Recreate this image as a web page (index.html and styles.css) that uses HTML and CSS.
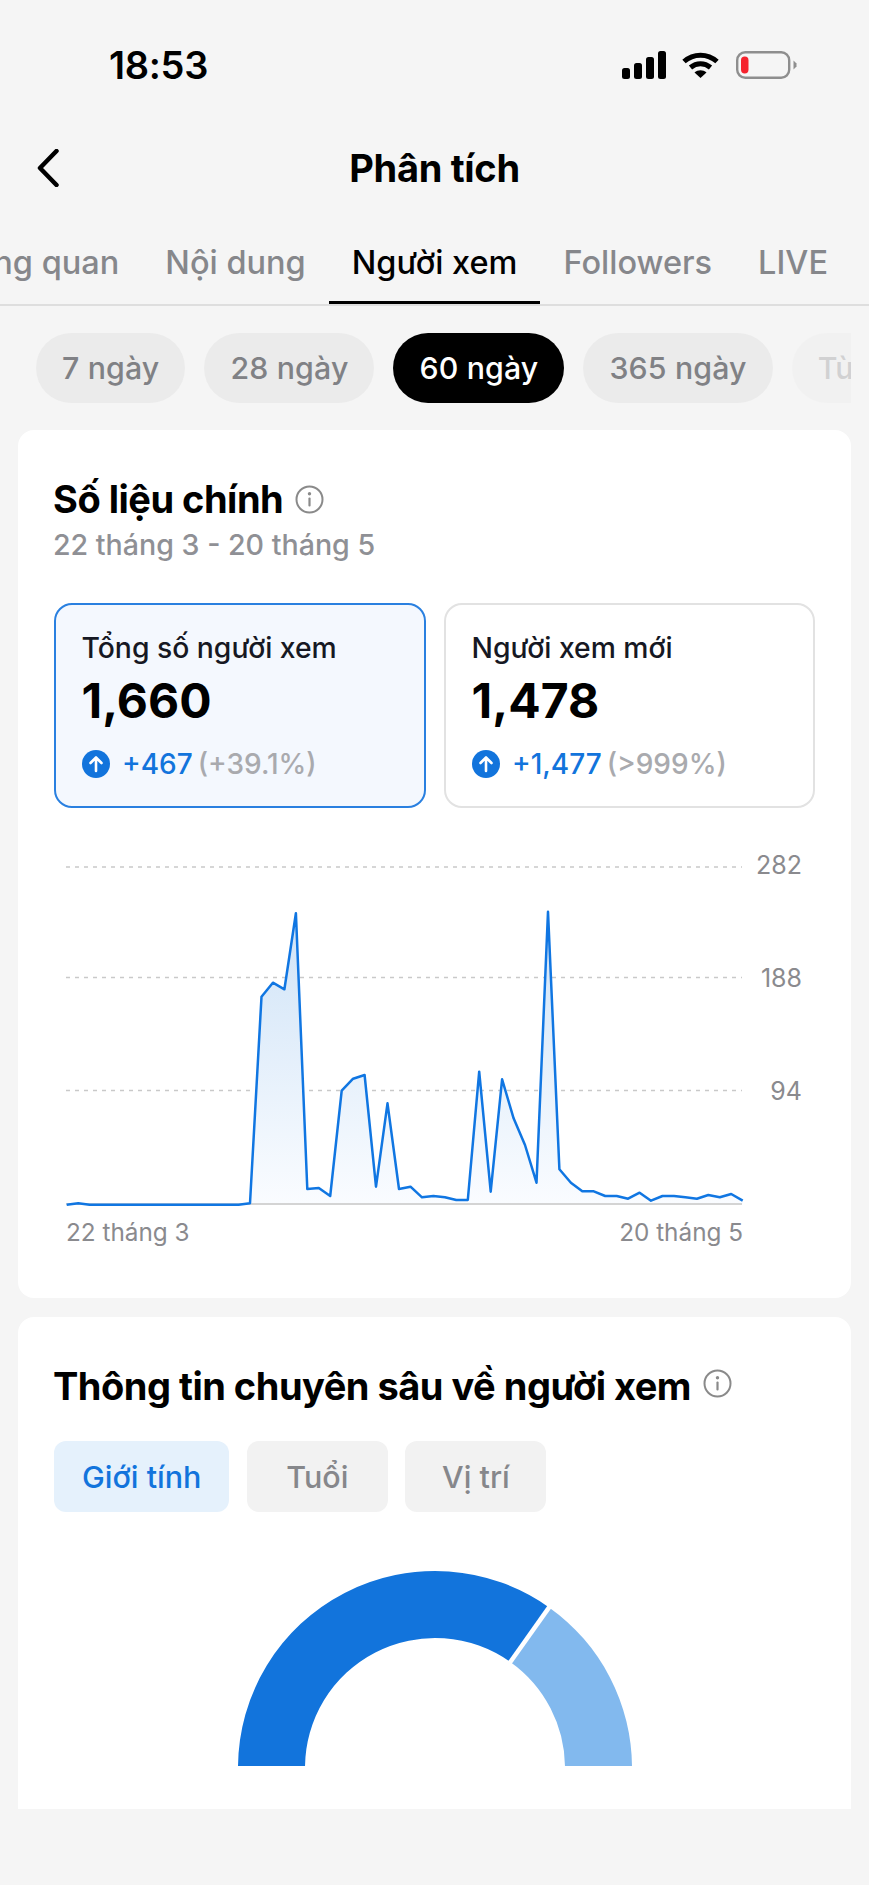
FILE: index.html
```html
<!DOCTYPE html>
<html lang="vi">
<head>
<meta charset="utf-8">
<title>Phân tích</title>
<link rel="stylesheet" href="styles.css">
</head>
<body>
<div class="page">
  <header class="status">
    <span class="time">18:53</span>
    <div class="status-icons">
      <svg class="signal" width="44" height="28" viewBox="0 0 44 28"><rect x="0" y="17" width="8" height="11" rx="2.5"/><rect x="12" y="12" width="8" height="16" rx="2.5"/><rect x="24" y="6" width="8" height="22" rx="2.5"/><rect x="36" y="0" width="8" height="28" rx="2.5"/></svg>
      <svg class="wifi" width="37" height="26" viewBox="0 0 37 26"><path d="M2 9.5C11.5 1 25.500 1 35 9.500" fill="none" stroke="#000" stroke-width="5"/><path d="M8.500 15.500C14.500 10.500 22.500 10.500 28.500 15.500" fill="none" stroke="#000" stroke-width="5"/><path d="M12.500 20.500C16 17.500 21 17.500 24.500 20.500L18.500 26Z"/></svg>
      <svg class="battery" width="61" height="28" viewBox="0 0 61 28"><rect x="1.200" y="1.200" width="52" height="25.600" rx="8" fill="none" stroke="#8e8e8e" stroke-width="2.400"/><rect x="5" y="5.500" width="7.500" height="17" rx="3.700" fill="#f5222d"/><path d="M57.500 9.500L60.500 12.500V15.500L57.500 18.500Z" fill="#8e8e8e"/></svg>
    </div>
  </header>

  <nav class="topbar">
    <svg class="back" width="22" height="38" viewBox="0 0 22 38"><path d="M19.500 2L3 19L19.500 36" fill="none" stroke="#000" stroke-width="4.500" stroke-linecap="round" stroke-linejoin="round"/></svg>
    <h1 class="page-title">Phân tích</h1>
  </nav>

  <div class="tabs">
    <div class="tabs-track">
      <span class="tab">Tổng quan</span>
      <span class="tab">Nội dung</span>
      <span class="tab tab-active">Người xem</span>
      <span class="tab">Followers</span>
      <span class="tab">LIVE</span>
    </div>
  </div>

  <div class="filters">
    <span class="pill">7 ngày</span>
    <span class="pill">28 ngày</span>
    <span class="pill pill-active">60 ngày</span>
    <span class="pill">365 ngày</span>
    <span class="pill pill-faded">Tùy chỉnh</span>
  </div>

  <section class="card card-metrics">
    <div class="card-heading">
      <h2 class="card-title">Số liệu chính</h2>
      <svg class="info" width="29" height="29" viewBox="0 0 29 29"><circle cx="14.500" cy="14.500" r="13" fill="none" stroke="#8a8a8a" stroke-width="2"/><circle cx="14.500" cy="8.800" r="1.700" fill="#8a8a8a"/><rect x="13.400" y="12.500" width="2.200" height="9" rx="1" fill="#8a8a8a"/></svg>
    </div>
    <p class="range">22 tháng 3 - 20 tháng 5</p>

    <div class="metrics">
      <div class="metric metric-active">
        <div class="metric-label">Tổng số người xem</div>
        <div class="metric-value">1,660</div>
        <div class="metric-delta">
          <svg class="up" width="28" height="28" viewBox="0 0 28 28"><circle cx="14" cy="14" r="14" fill="#1274dc"/><path d="M14 21V8M8.500 13L14 7.500L19.500 13" fill="none" stroke="#fff" stroke-width="2.600" stroke-linecap="round" stroke-linejoin="round"/></svg>
          <span class="delta-num">+467</span>
          <span class="delta-pct">(+39.1%)</span>
        </div>
      </div>
      <div class="metric">
        <div class="metric-label">Người xem mới</div>
        <div class="metric-value">1,478</div>
        <div class="metric-delta">
          <svg class="up" width="28" height="28" viewBox="0 0 28 28"><circle cx="14" cy="14" r="14" fill="#1274dc"/><path d="M14 21V8M8.500 13L14 7.500L19.500 13" fill="none" stroke="#fff" stroke-width="2.600" stroke-linecap="round" stroke-linejoin="round"/></svg>
          <span class="delta-num">+1,477</span>
          <span class="delta-pct">(&gt;999%)</span>
        </div>
      </div>
    </div>

    <svg class="chart" width="761" height="400" viewBox="54 850 761 400">
      <defs>
        <linearGradient id="area" gradientUnits="userSpaceOnUse" x1="0" y1="913" x2="0" y2="1204">
          <stop offset="0" stop-color="#cfe3f7"/>
          <stop offset="1" stop-color="#fafcff"/>
        </linearGradient>
      </defs>
      <g class="grid">
        <line x1="66" x2="742" y1="867" y2="867"/>
        <line x1="66" x2="742" y1="977.500" y2="977.500"/>
        <line x1="66" x2="742" y1="1090.500" y2="1090.500"/>
      </g>
      <path fill="url(#area)" d="M66.700 1204 L66.700 1204.700 78.200 1203.300 89.600 1204.700 238.600 1204.700 250 1203.300 261.500 996.700 272.900 982.700 284.400 989.300 295.900 913.300 307.300 1189 318.800 1188 330.200 1196 341.700 1090.700 353.100 1078.700 364.600 1075 376 1186.700 387.500 1103.300 399 1189 410.500 1186.700 422 1197.300 433.400 1196 444.900 1197.300 456.300 1200 467.800 1200 479.200 1071.700 490.700 1191.700 502.100 1079.300 513.600 1118.300 525 1145 536.500 1182.700 548 911.700 559.400 1169.300 570.900 1182.700 582.300 1191.300 593.800 1191.300 605.200 1196 616.700 1196 628.100 1198.700 639.600 1192.700 651 1200.700 662.500 1196 674 1196 685.400 1197.300 696.900 1198.700 708.300 1195 719.800 1197.300 731.200 1194 742.700 1200.700 L742.700 1204 Z"/>
      <line class="axis" x1="66" x2="742" y1="1204" y2="1204"/>
      <polyline class="line" points="66.700,1204.700 78.200,1203.300 89.600,1204.700 238.600,1204.700 250,1203.300 261.500,996.700 272.900,982.700 284.400,989.300 295.900,913.300 307.300,1189 318.800,1188 330.200,1196 341.700,1090.700 353.100,1078.700 364.600,1075 376,1186.700 387.500,1103.300 399,1189 410.500,1186.700 422,1197.300 433.400,1196 444.900,1197.300 456.300,1200 467.800,1200 479.200,1071.700 490.700,1191.700 502.100,1079.300 513.600,1118.300 525,1145 536.500,1182.700 548,911.700 559.400,1169.300 570.900,1182.700 582.300,1191.300 593.800,1191.300 605.200,1196 616.700,1196 628.100,1198.700 639.600,1192.700 651,1200.700 662.500,1196 674,1196 685.400,1197.300 696.900,1198.700 708.300,1195 719.800,1197.300 731.200,1194 742.700,1200.700"/>
      <text class="tick" x="802" y="874" text-anchor="end">282</text>
      <text class="tick" x="802" y="987" text-anchor="end">188</text>
      <text class="tick" x="802" y="1100" text-anchor="end">94</text>
      <text class="tick tick-date" x="66" y="1241">22 tháng 3</text>
      <text class="tick tick-date" x="743" y="1241" text-anchor="end">20 tháng 5</text>
    </svg>
  </section>

  <section class="card card-insights">
    <div class="card-heading">
      <h2 class="card-title">Thông tin chuyên sâu về người xem</h2>
      <svg class="info info-raised" width="29" height="29" viewBox="0 0 29 29"><circle cx="14.500" cy="14.500" r="13" fill="none" stroke="#8a8a8a" stroke-width="2"/><circle cx="14.500" cy="8.800" r="1.700" fill="#8a8a8a"/><rect x="13.400" y="12.500" width="2.200" height="9" rx="1" fill="#8a8a8a"/></svg>
    </div>
    <div class="segments">
      <span class="segment segment-active">Giới tính</span>
      <span class="segment">Tuổi</span>
      <span class="segment">Vị trí</span>
    </div>
    <svg class="donut" width="396" height="196" viewBox="237 1569 396 196">
      <path fill="#1274dc" d="M238 1767A197 197 0 0 1 549.100 1606.400L510.300 1661A130 130 0 0 0 305 1767Z"/>
      <path fill="#82b9ee" d="M549.100 1606.400A197 197 0 0 1 632 1767H565A130 130 0 0 0 510.300 1661Z"/>
      <path d="M550.500 1604.400L508.900 1663" stroke="#fff" stroke-width="4.500" fill="none"/>
    </svg>
  </section>
</div>
</body>
</html>
```

FILE: styles.css
```css
* { box-sizing: border-box; }
html, body { margin: 0; padding: 0; }
body {
  background: #f5f5f5;
  color: #000;
  font-family: "Inter", "Liberation Sans", sans-serif;
}
.page { width: 869px; height: 1885px; overflow: hidden; background: #f5f5f5; }

.status {
  height: 130px;
  display: flex;
  align-items: center;
  justify-content: space-between;
  padding: 0 72px 0 109px;
}
.time { font-size: 38px; font-weight: 600; letter-spacing: -0.3px; }
.status-icons { display: flex; align-items: center; }
.signal { display: block; }
.wifi { display: block; margin-left: 16px; }
.battery { display: block; margin-left: 17px; }

.topbar {
  height: 76px;
  display: flex;
  align-items: center;
  justify-content: center;
  position: relative;
}
.back { position: absolute; left: 37px; top: 19px; }
.page-title { margin: 0; font-size: 38px; font-weight: 700; letter-spacing: -0.3px; line-height: 44px; }

.tabs { height: 100px; border-bottom: 2px solid #dedede; overflow: hidden; }
.tabs-track {
  display: flex;
  margin-left: -68px;
  height: 99px;
  width: 1100px;
}
.tab {
  padding: 38px 23px 0;
  font-size: 32.500px;
  line-height: 38px;
  font-weight: 500;
  color: #86878b;
  white-space: nowrap;
}
.tab-active {
  color: #000;
  border-bottom: 4px solid #000;
}

.filters {
  margin: 27px 18px 0 36px;
  display: flex;
  gap: 19px;
  overflow: hidden;
}
.pill {
  flex: none;
  height: 70px;
  padding: 0 26px;
  border-radius: 35px;
  background: #ebebeb;
  color: #808185;
  font-size: 30.300px;
  letter-spacing: 0.150px;
  font-weight: 500;
  line-height: 70px;
  white-space: nowrap;
}
.pill-active { background: #000; color: #fff; }
.pill-faded { opacity: 0.3; }

.card { background: #fff; margin: 0 18px; padding: 0 36px; }
.card-metrics { margin-top: 27px; height: 868px; border-radius: 16px; }
.card-insights { margin-top: 19px; height: 492px; border-radius: 16px 16px 0 0; }
.card-heading { display: flex; align-items: center; gap: 12px; padding-top: 47px; }
.card-title { margin: 0 0 0 -1px; font-size: 38px; font-weight: 700; line-height: 44px; letter-spacing: -0.5px; white-space: nowrap; }
.info { display: block; flex: none; }
.info-raised { margin-top: -6px; }
.range { margin: 6px 0 0 -1px; font-size: 28.600px; line-height: 36px; font-weight: 500; color: #8f9095; }

.metrics { margin-top: 40px; display: grid; grid-template-columns: 372px 371px; gap: 18px; }
.metric {
  height: 205px;
  border: 2px solid #e2e2e2;
  border-radius: 18px;
  padding: 25px 25.500px 0;
}
.metric-active { border-color: #2a80e0; background: #f4f8fe; }
.metric-label { font-size: 28.300px; line-height: 36px; font-weight: 500; color: #161823; white-space: nowrap; }
.metric-value { margin-top: 6px; font-size: 48px; line-height: 58px; font-weight: 700; }
.metric-delta { margin-top: 16px; display: flex; align-items: center; gap: 12px; font-size: 28px; line-height: 36px; font-weight: 500; }
.up { display: block; flex: none; margin-left: 0.500px; }
.delta-num { color: #1274dc; }
.delta-pct { color: #a9aaae; margin-left: -7px; }

.chart { display: block; margin-top: 42px; }
.grid line { stroke: #c9c9c9; stroke-width: 1.500; stroke-dasharray: 4 5; }
.axis { stroke: #d4d4d4; stroke-width: 2; }
.line { fill: none; stroke: #1076e2; stroke-width: 2.500; stroke-linejoin: round; }
.tick { font-size: 25px; fill: #8a8a8e; font-family: "Inter", "Liberation Sans", sans-serif; }
.tick-date { font-size: 24.300px; }

.segments { margin-top: 33px; display: flex; gap: 17.500px; }
.segment {
  height: 71px;
  min-width: 141px;
  padding: 0 28px;
  border-radius: 12px;
  background: #f2f2f2;
  color: #86878b;
  font-size: 30.500px;
  line-height: 71px;
  font-weight: 500;
  text-align: center;
}
.segment-active { background: #e5f1fc; color: #1274dc; }
.donut { display: block; margin: 58px auto 0; }
```
